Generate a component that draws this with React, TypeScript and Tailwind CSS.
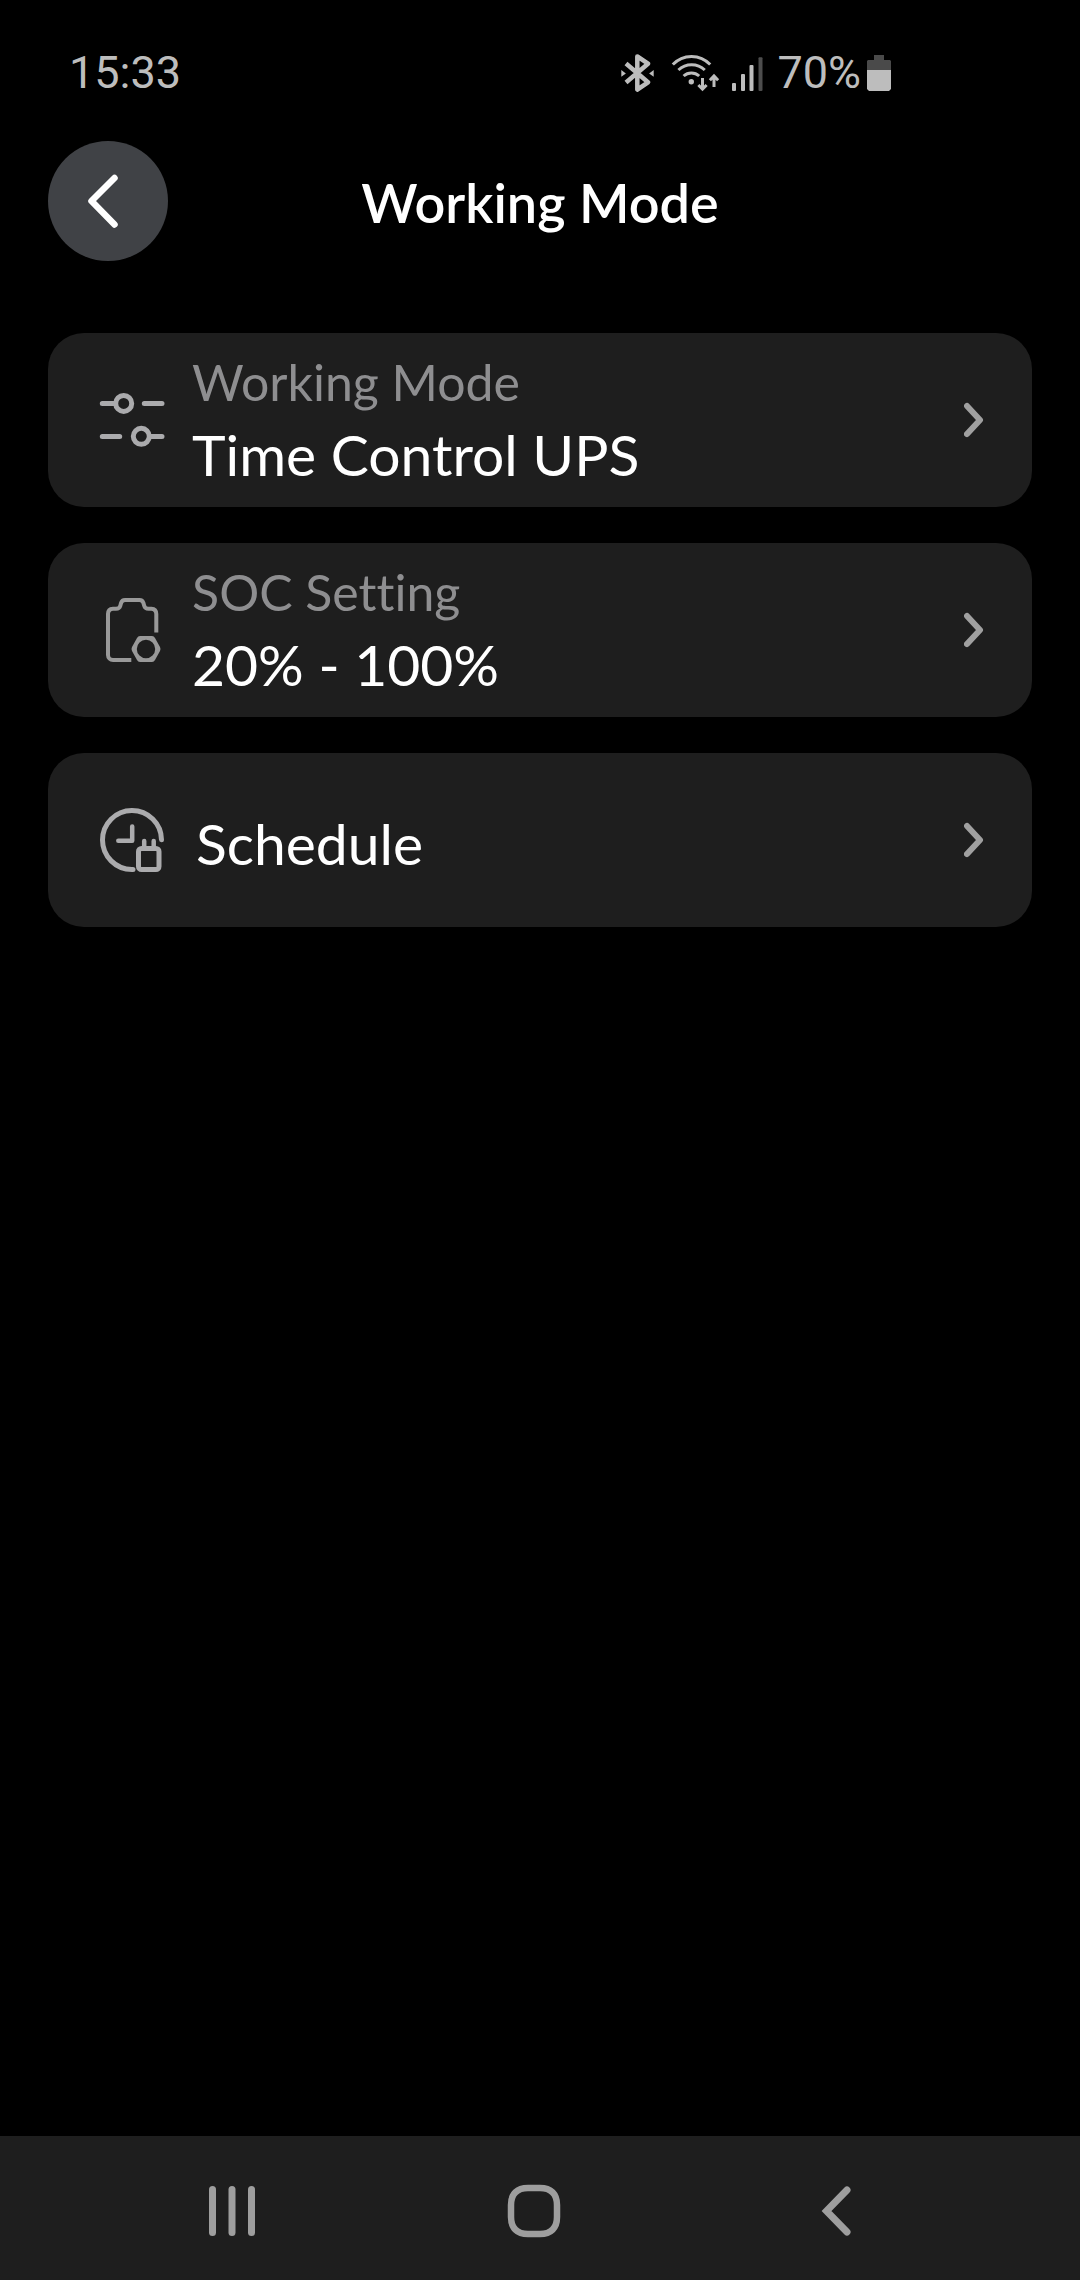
import type { ReactNode } from "react";

interface SettingRow {
  id: string;
  icon: ReactNode;
  label?: string;
  value: string;
}

function BluetoothIcon() {
  return (
    <svg width="34" height="38" viewBox="0 0 34 38" fill="none" aria-hidden="true">
      <path
        d="M5 9.5 27 28.3 16.3 35.6V2.4L27 9.7 5 28.5"
        stroke="currentColor"
        strokeWidth="4.5"
        strokeLinejoin="round"
      />
      <path d="M.3 16v6.8l4.6-3.4zM32.7 16v6.8l-4.6-3.4z" fill="currentColor" />
    </svg>
  );
}

function WifiIcon() {
  return (
    <svg width="49" height="38" viewBox="0 0 49 38" fill="none" stroke="currentColor" strokeWidth="3" aria-hidden="true">
      <path d="M1.8 10.6a25.5 25.5 0 0 1 37.4 0" />
      <path d="M7.4 16a19 19 0 0 1 26.4 0" />
      <path d="M12.6 22a11.5 11.5 0 0 1 15.6 0" />
      <circle cx="20.3" cy="27.7" r="2.7" fill="currentColor" stroke="none" />
      <path d="M31.5 24v11M27.4 31l4.1 4.2 4.1-4.2M43 33V22M38.9 26.2 43 22l4.1 4.2" />
    </svg>
  );
}

function SignalIcon() {
  return (
    <svg width="31" height="38" viewBox="0 0 31 38" fill="currentColor" aria-hidden="true">
      <rect x="0" y="29" width="4" height="8" rx="1" />
      <rect x="9" y="20" width="4" height="17" rx="1" />
      <rect x="17.5" y="11" width="4" height="26" rx="1" />
      <rect x="26.5" y="3.3" width="4" height="33.7" rx="1" fill="#4d4d4d" />
    </svg>
  );
}

function BatteryIcon() {
  return (
    <svg width="24" height="38" viewBox="0 0 24 38" aria-hidden="true">
      <path d="M7 1h10v5h6l1 1v10H0V7l1-1h6z" fill="#4a4a4a" />
      <path d="M0 16h24v19l-2 2H2l-2-2z" fill="currentColor" />
    </svg>
  );
}

function SlidersIcon() {
  return (
    <svg width="72" height="72" viewBox="0 0 72 72" fill="none" stroke="#ababad" strokeWidth="5" strokeLinecap="round" aria-hidden="true">
      <path d="M6.3 19.6H19M48.3 19.6H66" />
      <circle cx="27.7" cy="19.4" r="8" />
      <path d="M6.3 52.5h17.4M54 52.5h12" />
      <circle cx="45.3" cy="52.3" r="8" />
    </svg>
  );
}

function BatterySettingIcon() {
  return (
    <svg width="72" height="72" viewBox="0 0 72 72" fill="none" aria-hidden="true">
      <path
        d="M35.3 66H17a5 5 0 0 1-5-5V20q0-5 5-5.3h3q3.5 0 4.3-3l.8-2.8q.9-3 3.9-3h14.5q3 0 3.9 3l.8 2.8q.8 3 4.3 3h2.8q5 .3 5 5.3v18.5"
        stroke="#999999"
        strokeWidth="4"
      />
      <path
        fillRule="evenodd"
        d="M44 42h12q2 0 3 2l5 9q1 2 0 4l-5 9q-1 2-3 2H44q-2 0-3-2l-5-9q-1-2 0-4l5-9q1-2 3-2zM50 45.8a9.2 9.2 0 1 0 0 18.4 9.2 9.2 0 1 0 0-18.4z"
        fill="#999999"
      />
    </svg>
  );
}

function ScheduleIcon() {
  return (
    <svg width="72" height="72" viewBox="0 0 72 72" fill="none" stroke="#ababad" strokeWidth="5" strokeLinecap="round" strokeLinejoin="round" aria-hidden="true">
      <path d="M65.5 35.8A29.5 29.5 0 1 0 36 65.5h1" />
      <path d="M36.2 22.5v14.2H22.3" strokeWidth="4.5" />
      <rect x="42.5" y="44.5" width="20.5" height="21" rx="3" />
      <path d="M48.2 37v7M57.7 37v7" strokeWidth="4.5" />
    </svg>
  );
}

const SETTINGS: SettingRow[] = [
  { id: "mode", icon: <SlidersIcon />, label: "Working Mode", value: "Time Control UPS" },
  { id: "soc", icon: <BatterySettingIcon />, label: "SOC Setting", value: "20% - 100%" },
  { id: "schedule", icon: <ScheduleIcon />, value: "Schedule" },
];

function StatusBar() {
  return (
    <div className="flex h-[141px] items-center pt-1 pr-[189px] pl-[69px] font-[Roboto,sans-serif] text-[45px] leading-[54px] text-[#bdbdbd]">
      <span className="flex-1">15:33</span>
      <div className="flex items-center">
        <BluetoothIcon />
        <span className="ml-4">
          <WifiIcon />
        </span>
        <span className="ml-3">
          <SignalIcon />
        </span>
        <span className="ml-3.5">70%</span>
        <span className="ml-1.5">
          <BatteryIcon />
        </span>
      </div>
    </div>
  );
}

function SettingCard({ icon, label, value }: Omit<SettingRow, "id">) {
  return (
    <button
      type="button"
      className="flex h-[174px] w-full items-center rounded-[36px] bg-[#1e1e1e] px-12 text-left"
    >
      {icon}
      {label ? (
        <span className="ml-6 flex flex-1 flex-col">
          <span className="text-[50px] leading-[68px] text-[#8e8e90]">{label}</span>
          <span className="text-[57px] leading-[76px] text-white">{value}</span>
        </span>
      ) : (
        <span className="ml-7 flex-1 pt-1.5 text-[57px] leading-[76px] text-white">{value}</span>
      )}
      <svg width="20" height="36" viewBox="0 0 20 36" fill="none" aria-hidden="true">
        <path d="m3 4 13 14L3 32" stroke="#a0a0a0" strokeWidth="6" strokeLinecap="round" strokeLinejoin="round" />
      </svg>
    </button>
  );
}

function NavigationBar() {
  return (
    <nav className="flex h-36 items-center bg-[#1e1e1e] pt-1.5 pr-[93px] pl-[81px] text-[#9e9e9e]">
      <button type="button" aria-label="Recent apps" className="flex flex-1 justify-center">
        <svg width="54" height="54" viewBox="0 0 54 54" fill="currentColor">
          <rect x="4" y="2" width="7" height="50" rx="3.5" />
          <rect x="23.5" y="2" width="7" height="50" rx="3.5" />
          <rect x="43" y="2" width="7" height="50" rx="3.5" />
        </svg>
      </button>
      <button type="button" aria-label="Home" className="flex flex-1 justify-center">
        <svg width="54" height="54" viewBox="0 0 54 54" fill="none" stroke="currentColor" strokeWidth="6.5">
          <path d="M21 4h12c11 0 17 6 17 17v12c0 11-6 17-17 17H21C10 50 4 44 4 33V21C4 10 10 4 21 4z" />
        </svg>
      </button>
      <button type="button" aria-label="Back" className="flex flex-1 justify-center">
        <svg width="54" height="54" viewBox="0 0 54 54" fill="none">
          <path d="M38 6 17.5 27 38 48" stroke="currentColor" strokeWidth="7" strokeLinecap="round" />
        </svg>
      </button>
    </nav>
  );
}

export default function App() {
  return (
    <div className="flex min-h-screen flex-col bg-black font-[Lato,sans-serif] [font-variant-ligatures:none]">
      <StatusBar />

      {/* Header */}
      <header className="grid grid-cols-[120px_1fr_120px] items-center px-12">
        <button
          type="button"
          aria-label="Go back"
          className="flex size-[120px] items-center justify-center rounded-full bg-[#404246]"
        >
          <svg width="120" height="120" viewBox="0 0 120 120" fill="none">
            <path d="M66.5 37l-23 23 23 23.5" stroke="#fff" strokeWidth="6.5" strokeLinecap="round" strokeLinejoin="round" />
          </svg>
        </button>
        <h1 className="pt-1 text-center text-[54px] leading-[76px] font-semibold text-white">Working Mode</h1>
      </header>

      <main className="flex flex-1 flex-col gap-9 px-12 pt-18">
        {SETTINGS.map(({ id, ...row }) => (
          <SettingCard key={id} {...row} />
        ))}
      </main>

      <NavigationBar />
    </div>
  );
}
